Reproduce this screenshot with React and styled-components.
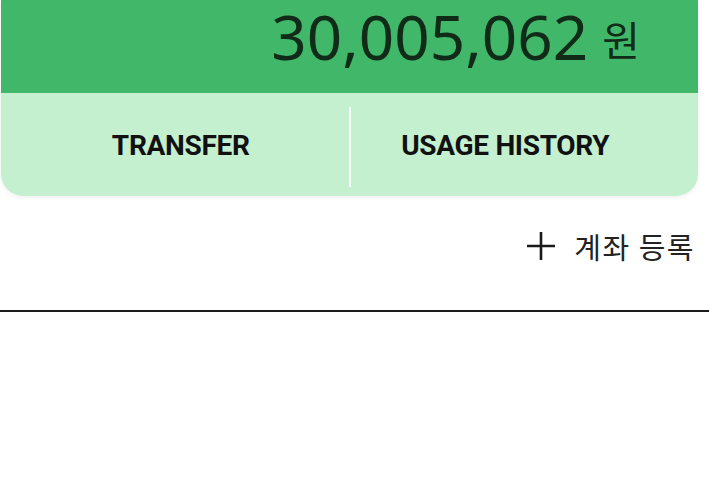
import React from "react";
import styled, { createGlobalStyle } from "styled-components";

const GlobalStyle = createGlobalStyle`
  html, body {
    margin: 0;
    padding: 0;
    background: #ffffff;
  }
  body {
    font-family: "Noto Sans", "Noto Sans CJK KR", sans-serif;
    color: #222222;
  }
`;

const Page = styled.div`
  width: 709px;
  height: 500px;
  overflow: hidden;
  display: flex;
  flex-direction: column;
`;

const Card = styled.section`
  margin: 0 11px 0 1px;
  border-radius: 0 0 22px 22px;
  overflow: hidden;
  box-shadow: 0 2px 4px rgba(0, 0, 0, 0.06);
`;

const Balance = styled.div`
  height: 93px;
  background: #41b76a;
  display: flex;
  justify-content: flex-end;
  align-items: center;
  padding: 0 58px 20px 0;
  box-sizing: border-box;
`;

const Amount = styled.span`
  font-family: "Noto Sans", sans-serif;
  font-size: 62px;
  line-height: 1.2;
  color: #112b19;
`;

const Currency = styled.span`
  font-family: "Noto Sans CJK KR", sans-serif;
  font-size: 41px;
  line-height: 1;
  margin: 4px 0 0 14px;
  color: #112b19;
`;

const Actions = styled.div`
  height: 103px;
  background: #c5f0d0;
  display: grid;
  grid-template-columns: 1fr 2px 1fr;
  align-items: center;
`;

const Action = styled.button`
  border: none;
  background: transparent;
  height: 100%;
  font-family: Roboto, "Liberation Sans", sans-serif;
  font-weight: 700;
  font-size: 28px;
  letter-spacing: -0.3px;
  color: #111111;
  padding: 2px ${(p) => p.$padRight || 0}px 0 ${(p) => p.$padLeft || 0}px;
  cursor: pointer;
`;

const Divider = styled.div`
  width: 2px;
  height: 80px;
  margin-top: 4px;
  background: #f4fbf6;
`;

const AddRow = styled.div`
  display: flex;
  justify-content: flex-end;
  align-items: center;
  gap: 18px;
  height: 100px;
  padding-right: 14px;
  box-sizing: border-box;
`;

const AddLabel = styled.span`
  font-family: "Noto Sans CJK KR", sans-serif;
  font-size: 29px;
  line-height: 1;
  color: #222222;
  letter-spacing: 1.5px;
`;

const Rule = styled.hr`
  margin: 14px 0 0;
  border: none;
  height: 2px;
  background: #1c1c1c;
`;

const PlusIcon = () => (
  <svg width="30" height="30" viewBox="0 0 30 30" aria-hidden="true">
    <path d="M15 1v28M1 15h28" stroke="#1a1a1a" strokeWidth="2.6" fill="none" />
  </svg>
);

export default function App() {
  return (
    <Page>
      <GlobalStyle />
      <Card>
        <Balance>
          <Amount>30,005,062</Amount>
          <Currency>원</Currency>
        </Balance>
        <Actions>
          <Action $padLeft={12}>TRANSFER</Action>
          <Divider />
          <Action $padRight={38}>USAGE HISTORY</Action>
        </Actions>
      </Card>
      <AddRow>
        <PlusIcon />
        <AddLabel>계좌 등록</AddLabel>
      </AddRow>
      <Rule />
    </Page>
  );
}
